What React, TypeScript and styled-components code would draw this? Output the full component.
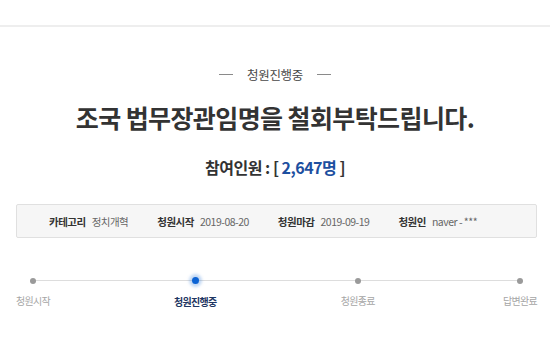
import styled, { createGlobalStyle } from "styled-components";

const GlobalStyle = createGlobalStyle`
	html, body {
		margin: 0;
		padding: 0;
		background: #ffffff;
		font-family: "Noto Sans CJK KR", "Noto Sans", sans-serif;
	}
`;

const steps = [
	{ label: "청원시작", active: false },
	{ label: "청원진행중", active: true },
	{ label: "청원종료", active: false },
	{ label: "답변완료", active: false },
];

export default function App() {
	return (
		<Page>
			<GlobalStyle />
			<TopBar />

			<Status>
				<Dash />
				<span>청원진행중</span>
				<Dash />
			</Status>

			<Title>조국 법무장관임명을 철회부탁드립니다.</Title>

			<Count>
				참여인원 : [ <Number>2,647명</Number> ]
			</Count>

			<InfoBox>
				<InfoItem>
					<InfoLabel>카테고리</InfoLabel>
					<InfoValue>정치개혁</InfoValue>
				</InfoItem>
				<InfoItem>
					<InfoLabel>청원시작</InfoLabel>
					<InfoValue>2019-08-20</InfoValue>
				</InfoItem>
				<InfoItem>
					<InfoLabel>청원마감</InfoLabel>
					<InfoValue>2019-09-19</InfoValue>
				</InfoItem>
				<InfoItem>
					<InfoLabel>청원인</InfoLabel>
					<InfoValue>naver - ***</InfoValue>
				</InfoItem>
			</InfoBox>

			<Timeline>
				{steps.map((s) => (
					<Step key={s.label}>
						<Dot $active={s.active} />
						<StepLabel $active={s.active}>{s.label}</StepLabel>
					</Step>
				))}
			</Timeline>
		</Page>
	);
}

const Page = styled.div`
	width: 550px;
	height: 350px;
	overflow: hidden;
	display: flex;
	flex-direction: column;
	align-items: stretch;
`;

const TopBar = styled.div`
	height: 25px;
	border-bottom: 2px solid #eeeeee;
	flex-shrink: 0;
`;

const Status = styled.div`
	margin-top: 39px;
	display: flex;
	justify-content: center;
	align-items: center;
	gap: 14px;
	height: 16px;
	font-size: 12.5px;
	color: #484848;
	letter-spacing: -0.3px;
`;

const Dash = styled.i`
	display: block;
	width: 14px;
	height: 1px;
	background: #8a8a8a;
`;

const Title = styled.h1`
	margin: 19px 0 0;
	text-align: center;
	font-size: 25px;
	line-height: 32px;
	font-weight: 700;
	color: #333333;
	letter-spacing: -0.6px;
`;

const Count = styled.div`
	margin-top: 24px;
	text-align: center;
	font-size: 16px;
	line-height: 20px;
	font-weight: 700;
	color: #333333;
	letter-spacing: -0.5px;
`;

const Number = styled.span`
	color: #1d4fa0;
`;

const InfoBox = styled.div`
	margin: 27px 13px 0 16px;
	height: 34px;
	box-sizing: border-box;
	border: 1px solid #e0e0e0;
	border-radius: 2px;
	background: #f6f6f6;
	display: flex;
	align-items: center;
	gap: 29px;
	padding-left: 32px;
	font-size: 10.5px;
`;

const InfoItem = styled.div`
	display: flex;
	align-items: center;
	gap: 6px;
`;

const InfoLabel = styled.span`
	font-weight: 700;
	color: #333333;
	letter-spacing: -0.5px;
`;

const InfoValue = styled.span`
	color: #666666;
	letter-spacing: -0.5px;
`;

const Timeline = styled.div`
	position: relative;
	margin: 39px 13px 0 16px;
	display: flex;
	justify-content: space-between;

	&::before {
		content: "";
		position: absolute;
		left: 17px;
		right: 17px;
		top: 3px;
		height: 1px;
		background: #dddddd;
	}
`;

const Step = styled.div`
	position: relative;
	width: 34px;
	display: flex;
	flex-direction: column;
	align-items: center;
	gap: 12px;
`;

const Dot = styled.span<{ $active: boolean }>`
	display: block;
	width: ${(p) => (p.$active ? "7px" : "6px")};
	height: ${(p) => (p.$active ? "7px" : "6px")};
	margin-top: ${(p) => (p.$active ? "0" : "1px")};
	margin-bottom: ${(p) => (p.$active ? "0" : "-1px")};
	border-radius: 50%;
	background: ${(p) => (p.$active ? "#0c63d4" : "#9a9a9a")};
	box-shadow: ${(p) => (p.$active ? "0 0 3px 3px rgba(12, 99, 212, 0.25)" : "none")};
`;

const StepLabel = styled.span<{ $active: boolean }>`
	white-space: nowrap;
	font-size: 10px;
	line-height: 12px;
	letter-spacing: -0.7px;
	font-weight: ${(p) => (p.$active ? 700 : 400)};
	color: ${(p) => (p.$active ? "#1f3763" : "#a6a6a6")};
`;
